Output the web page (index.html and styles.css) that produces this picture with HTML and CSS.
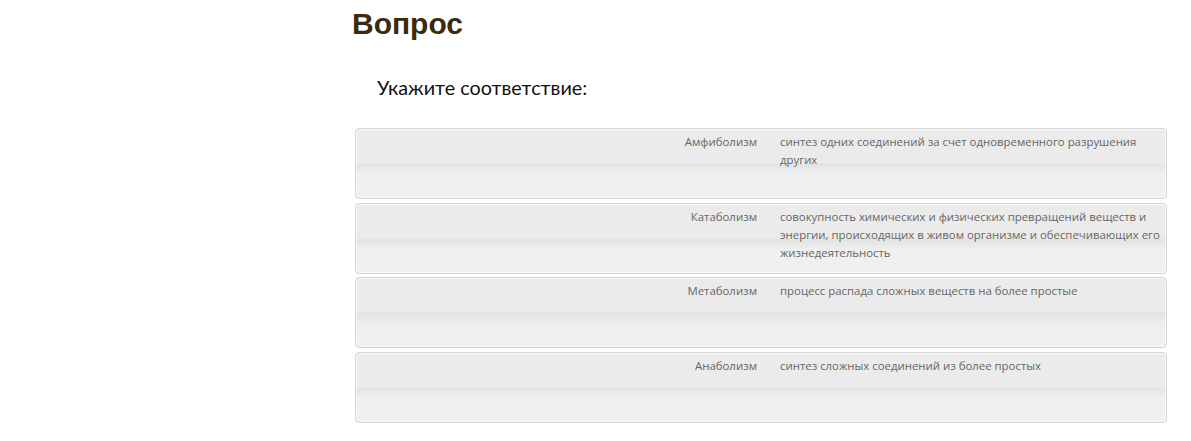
FILE: index.html
```html
<!DOCTYPE html>
<html lang="ru">
<head>
    <meta charset="UTF-8">
    <meta name="viewport" content="width=device-width, initial-scale=1.0">
    <title>Вопрос</title>
    <link rel="stylesheet" href="styles.css">
</head>
<body>
    <div class="layout">
        <div class="sidebar"></div>
        <div class="content">
            <h1 class="title">Вопрос</h1>
            <p class="question">Укажите соответствие:</p>

            <ul class="matches">
                <li class="match">
                    <span class="term">Амфиболизм</span>
                    <span class="answer">синтез одних соединений за счет одновременного разрушения других</span>
                </li>
                <li class="match">
                    <span class="term">Катаболизм</span>
                    <span class="answer">совокупность химических и физических превращений веществ и энергии, происходящих в живом организме и обеспечивающих его жизнедеятельность</span>
                </li>
                <li class="match">
                    <span class="term">Метаболизм</span>
                    <span class="answer">процесс распада сложных веществ на более простые</span>
                </li>
                <li class="match">
                    <span class="term">Анаболизм</span>
                    <span class="answer">синтез сложных соединений из более простых</span>
                </li>
            </ul><!-- matches -->
        </div><!-- content -->
    </div><!-- layout -->
</body>
</html>
```

FILE: styles.css
```css
html, body{
    margin: 0;
    padding: 0;
    background: #fff;
}
.layout{
    display: grid;
    grid-template-columns: 352px 1fr;
}
.content{
    padding: 6px 24px 0 0;
}
.title{
    margin: 0;
    font-family: "Liberation Sans", Arial, sans-serif;
    font-size: 30px;
    line-height: 36px;
    font-weight: bold;
    color: #3c2a0c;
}
.question{
    margin: 31px 0 0 25px;
    font-family: Lato, "Open Sans", sans-serif;
    font-size: 19.8px;
    line-height: 28px;
    color: #111;
}
.matches{
    list-style: none;
    margin: 27px 0 0 3px;
    padding: 0;
    display: flex;
    flex-direction: column;
    gap: 3.67px;
}
.match{
    display: grid;
    grid-template-columns: 1fr 386px;
    min-height: 65px;
    padding-top: 4px;
    border: 1px solid #d3d3d3;
    border-radius: 4px;
    box-shadow: inset 0 0 0 1px rgba(255,255,255,.6);
    background: linear-gradient(to bottom, #ebebeb 0%, #ebebeb 49%, #e3e3e3 51%, #efefef 66%, #f0f0f0 100%);
    font-family: "Open Sans", sans-serif;
    font-size: 11.4px;
    line-height: 18px;
    color: #666;
}
.term{
    text-align: right;
    padding-right: 23px;
}
```
